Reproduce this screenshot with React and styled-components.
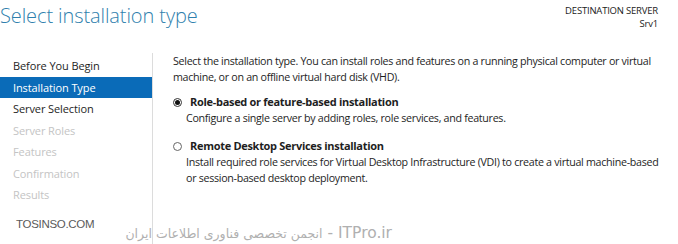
import React from "react";
import styled, { createGlobalStyle } from "styled-components";

const Global = createGlobalStyle`
  html, body { margin: 0; padding: 0; background: #fff; }
  body { font-family: "Open Sans", "Noto Sans", sans-serif; color: #1e1e1e; }
  #root { width: 678px; height: 244px; overflow: hidden; }
`;

const Page = styled.div`
  position: relative;
  width: 678px;
  height: 244px;
  background: #fff;
  display: flex;
  flex-direction: column;
`;

const Header = styled.header`
  display: flex;
  justify-content: space-between;
  align-items: flex-start;
  height: 53px;
  padding-right: 20px;
`;

const Title = styled.h1`
  margin: 0;
  margin-top: 2px;
  font-family: "Open Sans", sans-serif;
  font-weight: 300;
  font-size: 20px;
  line-height: 28px;
  color: #2f7fad;
  letter-spacing: -0.1px;
`;

const Dest = styled.div`
  margin-top: 5px;
  text-align: right;
  font-size: 9.5px;
  line-height: 12.5px;
  color: #222;
  letter-spacing: -0.2px;
`;

const Body = styled.div`
  flex: 1;
  display: flex;
`;

const Nav = styled.nav`
  width: 152px;
  border-right: 1px solid #dcdcdc;
  display: flex;
  flex-direction: column;
  padding-top: 2px;
`;

const NavItem = styled.div`
  height: 21.5px;
  line-height: 21.5px;
  padding-left: 13px;
  font-size: 11px;
  letter-spacing: -0.1px;
  color: ${(p) => (p.$active ? "#fff" : p.$disabled ? "#c4c4c4" : "#1e1e1e")};
  background: ${(p) => (p.$active ? "#0a6bb8" : "transparent")};
`;

const Content = styled.main`
  flex: 1;
  padding: 0 18px 0 20px;
  font-size: 10.7px;
  letter-spacing: -0.3px;
  line-height: 16px;
  color: #1e1e1e;
`;

const Intro = styled.p`
  margin: 0;
`;

const Option = styled.div`
  margin-top: ${(p) => p.$gap}px;
`;

const OptionHead = styled.label`
  display: flex;
  align-items: center;
  gap: 8px;
  font-weight: 700;
  font-size: 11px;
`;

const Radio = styled.span`
  width: 9px;
  height: 9px;
  border-radius: 50%;
  border: 1px solid ${(p) => (p.$checked ? "#333" : "#666")};
  box-sizing: border-box;
  display: inline-flex;
  align-items: center;
  justify-content: center;
  flex: none;
  &::after {
    content: "";
    width: 5px;
    height: 5px;
    border-radius: 50%;
    background: ${(p) => (p.$checked ? "#111" : "transparent")};
  }
`;

const OptionDesc = styled.div`
  padding-left: 13px;
`;

const MarkLeft = styled.div`
  position: absolute;
  left: 16px;
  top: 218px;
  font-family: "Liberation Sans", Arial, sans-serif;
  font-size: 11.5px;
  color: #5a5a5a;
  letter-spacing: -0.3px;
`;

const MarkBottom = styled.div`
  position: absolute;
  right: 286px;
  top: 224px;
  direction: rtl;
  font-family: "DejaVu Sans", "Noto Sans", sans-serif;
  font-size: 15.5px;
  color: #b0b0b0;
  white-space: nowrap;
`;

const Persian = styled.span`
  font-size: 12.5px;
`;

const steps = [
  { label: "Before You Begin" },
  { label: "Installation Type", active: true },
  { label: "Server Selection" },
  { label: "Server Roles", disabled: true },
  { label: "Features", disabled: true },
  { label: "Confirmation", disabled: true },
  { label: "Results", disabled: true },
];

export default function App() {
  return (
    <>
      <Global />
      <Page>
        <Header>
          <Title>Select installation type</Title>
          <Dest>
            DESTINATION SERVER
            <br />
            Srv1
          </Dest>
        </Header>
        <Body>
          <Nav>
            {steps.map((s) => (
              <NavItem key={s.label} $active={s.active} $disabled={s.disabled}>
                {s.label}
              </NavItem>
            ))}
          </Nav>
          <Content>
            <Intro>
              Select the installation type. You can install roles and features on a running physical computer or virtual
              machine, or on an offline virtual hard disk (VHD).
            </Intro>
            <Option $gap={9}>
              <OptionHead>
                <Radio $checked />
                Role-based or feature-based installation
              </OptionHead>
              <OptionDesc>Configure a single server by adding roles, role services, and features.</OptionDesc>
            </Option>
            <Option $gap={12}>
              <OptionHead>
                <Radio />
                Remote Desktop Services installation
              </OptionHead>
              <OptionDesc>
                Install required role services for Virtual Desktop Infrastructure (VDI) to create a virtual machine-based
                or session-based desktop deployment.
              </OptionDesc>
            </Option>
          </Content>
        </Body>
        <MarkLeft>TOSINSO.COM</MarkLeft>
        <MarkBottom>
          ITPro.ir - <Persian>انجمن تخصصی فناوری اطلاعات ایران</Persian>
        </MarkBottom>
      </Page>
    </>
  );
}
